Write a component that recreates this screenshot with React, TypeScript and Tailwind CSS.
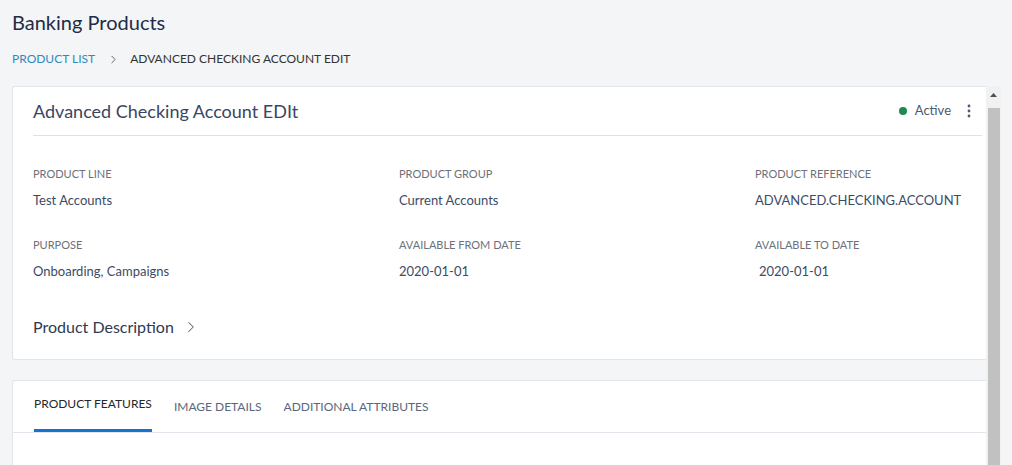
import { ChevronRight } from 'lucide-react';

interface Field {
  label: string;
  value: string;
  indent?: boolean;
}

const ROW_ONE: Field[] = [
  { label: 'Product Line', value: 'Test Accounts' },
  { label: 'Product Group', value: 'Current Accounts' },
  { label: 'Product Reference', value: 'ADVANCED.CHECKING.ACCOUNT' },
];

const ROW_TWO: Field[] = [
  { label: 'Purpose', value: 'Onboarding, Campaigns' },
  { label: 'Available From Date', value: '2020-01-01' },
  { label: 'Available To Date', value: '2020-01-01', indent: true },
];

const TABS = ['Product Features', 'Image Details', 'Additional Attributes'];

function FieldRow({ fields }: { fields: Field[] }) {
  return (
    <div className="grid grid-cols-[366px_356px_1fr]">
      {fields.map(f => (
        <div key={f.label}>
          <div className="text-[11px] leading-4 uppercase text-[#6d7179]">{f.label}</div>
          <div className={`mt-2 text-[13px] leading-5 text-[#3c4b66] ${f.indent ? 'pl-1' : ''}`}>{f.value}</div>
        </div>
      ))}
    </div>
  );
}

export default function App() {
  return (
    <div
      className="h-[465px] w-[1012px] overflow-hidden bg-[#f4f5f7]"
      style={{ fontFamily: 'Lato, "Open Sans", sans-serif' }}
    >
      {/* header */}
      <div className="pl-[12px] pt-[8px] text-[20px] leading-7 text-[#1f2c47]">Banking Products</div>
      <div className="flex h-[33px] items-center pl-[12px] pt-[13px] text-[12px] uppercase">
        <span className="text-[#2f8ac2]">Product List</span>
        <ChevronRight size={13} strokeWidth={1.6} className="ml-[12px] mr-[10px] text-[#555]" />
        <span className="text-[#333]">Advanced Checking Account Edit</span>
      </div>

      {/* scroll area */}
      <div className="mt-[17px] flex h-[379px]">
        <div className="flex-1 pl-[12px]">
          {/* details card */}
          <div className="rounded-l-[3px] border border-r-0 border-[#e2e5eb] bg-white">
            <div className="ml-[20px] mr-[4px] flex h-[49px] items-center border-b border-[#dde1ea]">
              <div className="flex-1 text-[18px] text-[#3a4661]">Advanced Checking Account EDIt</div>
              <div className="flex items-center">
                <span className="h-[8px] w-[8px] rounded-full bg-[#1e8a4f]" />
                <span className="ml-[8px] text-[13px] text-[#4b5a71]">Active</span>
                <svg width="4" height="14" viewBox="0 0 4 14" className="ml-[16px] mr-[11px]">
                  <circle cx="2" cy="2" r="1.4" fill="#4b5a71" />
                  <circle cx="2" cy="7" r="1.4" fill="#4b5a71" />
                  <circle cx="2" cy="12" r="1.4" fill="#4b5a71" />
                </svg>
              </div>
            </div>

            <div className="pl-[20px] pr-[4px] pt-[30px]">
              <FieldRow fields={ROW_ONE} />
              <div className="mt-[27px]">
                <FieldRow fields={ROW_TWO} />
              </div>
              <div className="mt-[34px] flex items-center pb-[20px]">
                <span className="text-[16px] leading-6 text-[#2e3a52]">Product Description</span>
                <ChevronRight size={18} strokeWidth={1.4} className="ml-[8px] text-[#666]" />
              </div>
            </div>
          </div>

          {/* tabs card */}
          <div className="mt-[20px] h-[200px] rounded-l-[3px] border border-r-0 border-[#e2e5eb] bg-white">
            <div className="flex h-[52px] gap-[22px] border-b border-[#e2e5eb] pl-[21px]">
              {TABS.map((t, i) => (
                <div
                  key={t}
                  className={`flex items-center border-b-[3px] uppercase ${
                    i === 0
                      ? 'border-[#1473d1] pb-[2px] text-[12px] text-[#25272b]'
                      : 'border-transparent pt-[4px] text-[12px] text-[#59677d]'
                  }`}
                >
                  {t}
                </div>
              ))}
            </div>
          </div>
        </div>

        {/* scrollbar */}
        <div className="flex w-[15px] flex-col bg-[#f1f1f1]">
          <div className="flex h-[22px] justify-center pt-[7px]">
            <svg width="7" height="4" viewBox="0 0 7 4">
              <polygon points="3.5,0 7,4 0,4" fill="#505050" />
            </svg>
          </div>
          <div className="ml-[2px] w-[12px] flex-1 bg-[#c1c1c1]" />
        </div>
        <div className="w-[11px]" />
      </div>
    </div>
  );
}
